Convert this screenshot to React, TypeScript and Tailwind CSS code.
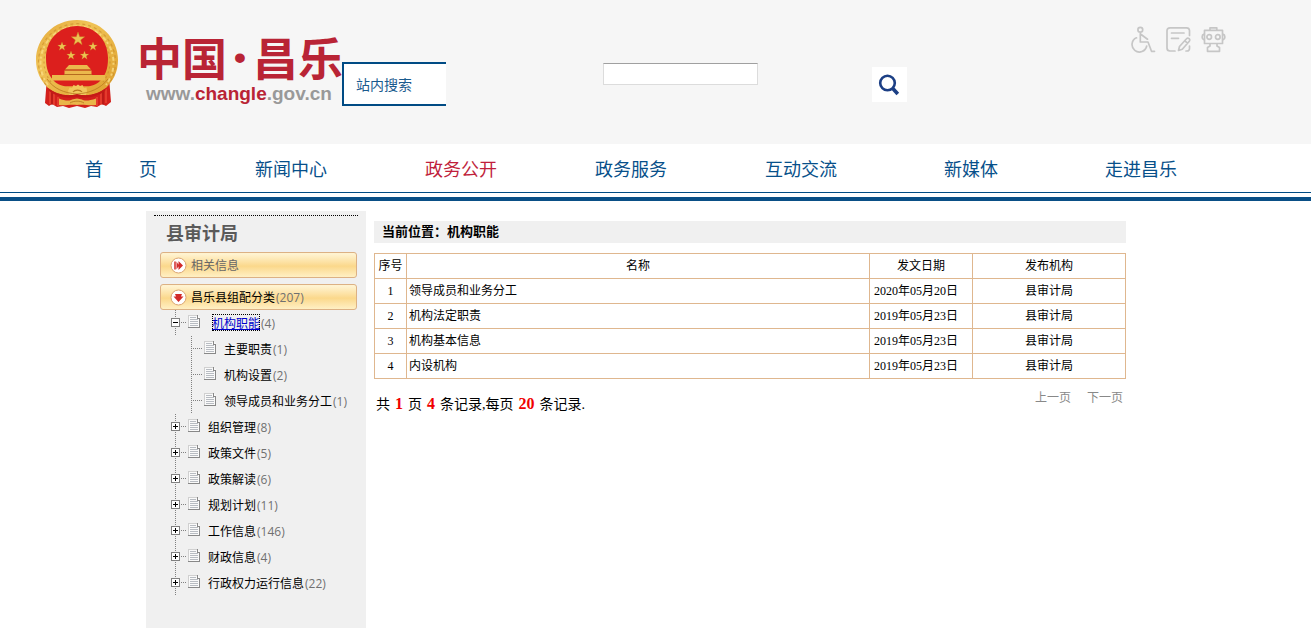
import { useState } from "react";
import type { ReactNode } from "react";
import clsx from "clsx";

const navItems = [
  { label: "首　　页" },
  { label: "新闻中心" },
  { label: "政务公开", active: true },
  { label: "政务服务" },
  { label: "互动交流" },
  { label: "新媒体" },
  { label: "走进昌乐" },
];

interface Category {
  name: string;
  count: number;
  children?: Category[];
}

const categories: Category[] = [
  {
    name: "机构职能",
    count: 4,
    children: [
      { name: "主要职责", count: 1 },
      { name: "机构设置", count: 2 },
      { name: "领导成员和业务分工", count: 1 },
    ],
  },
  { name: "组织管理", count: 8 },
  { name: "政策文件", count: 5 },
  { name: "政策解读", count: 6 },
  { name: "规划计划", count: 11 },
  { name: "工作信息", count: 146 },
  { name: "财政信息", count: 4 },
  { name: "行政权力运行信息", count: 22 },
];

const records = [
  { title: "领导成员和业务分工", date: "2020年05月20日" },
  { title: "机构法定职责", date: "2019年05月23日" },
  { title: "机构基本信息", date: "2019年05月23日" },
  { title: "内设机构", date: "2019年05月23日" },
];

const STAR =
  "M0 -7L1.7 -2.2L6.7 -2.2L2.7 .9L4.1 5.7L0 2.8L-4.1 5.7L-2.7 .9L-6.7 -2.2L-1.7 -2.2Z";

function Emblem() {
  return (
    <svg viewBox="0 0 83 92" className="h-[92px] w-[83px] shrink-0" aria-hidden="true">
      <defs>
        <linearGradient id="gold" x1="0" y1="0" x2="1" y2="1">
          <stop offset="0%" stopColor="#e3a83a" />
          <stop offset="35%" stopColor="#f0c356" />
          <stop offset="100%" stopColor="#dd9f2c" />
        </linearGradient>
      </defs>
      {/* drapery */}
      <path d="M11 58L9 84l4 3 3-2 5 3 6-1 6 2 8-2 8 2 6-2 6 1 5-3 4 2 5-4-2-25z" fill="#d3201c" />
      <path d="M14 70v15M18 74v12M65 74v12M70 70v14M22 78v9M61 78v9" stroke="#ef4e38" strokeWidth="1.200" />
      <path d="M16 72v14M67 73v13" stroke="#a51612" strokeWidth="1" />
      {/* wheat ring */}
      <path
        d="M41 1C64 1 82 19 82 41C82 53 77 62 70 69C62 75 52 78 41 75C30 78 20 75 12 69C5 62 0 53 0 41C0 19 18 1 41 1Z"
        fill="url(#gold)"
      />
      <g fill="none">
        <path d="M12 66A36.500 36.500 0 1 1 70 66" stroke="#fadc84" strokeWidth="2" strokeDasharray="4 2 2 3" opacity=".8" />
        <path d="M10 66A38.500 38.500 0 1 1 72 66" stroke="#c5882a" strokeWidth="1.200" strokeDasharray="3 3" opacity=".6" />
        <path d="M15 63A33 33 0 1 1 67 63" stroke="#c5882a" strokeWidth="1.200" strokeDasharray="2 3" opacity=".6" />
      </g>
      <path d="M41 7C59 7 72 21 72 39C72 51 69 57 63 63C55 69 48 67 41 67C34 67 27 69 19 63C13 57 10 51 10 39C10 21 23 7 41 7Z" fill="#dc1f1d" />
      <g fill="#ecc352" stroke="#c98424" strokeWidth=".4">
        <path d={STAR} transform="translate(42 20)" />
        <path d={STAR} transform="translate(26 27.500) scale(.65)" />
        <path d={STAR} transform="translate(57 27.500) scale(.65)" />
        <path d={STAR} transform="translate(35 36.500) scale(.65)" />
        <path d={STAR} transform="translate(48.500 36.500) scale(.65)" />
      </g>
      {/* gate tower */}
      <g fill="#ebb94c">
        <path d="M33 46h18l4 4.500h-26z" />
        <path d="M28.500 51.500h27v4h-27z" />
        <path d="M16 56h53v5.500H16z" />
      </g>
      <path d="M29 51h26M28 55.500h28" stroke="#b06c1c" strokeWidth=".9" />
      {/* cog and ribbons */}
      <path d="M32 72l1.500-3.500 2.500 .5 1.500-3 2.500 1 2-1.500 2 1.500 2.500-1 1.500 3 2.500-.5L51 72l-1 4H33z" fill="#f1c85c" />
      <path d="M37 73a5 3.500 0 0 1 9 0" fill="none" stroke="#b9791f" strokeWidth="1.200" />
      <path d="M11 60C18 70 28 74 41 75C54 74 64 70 72 60" fill="none" stroke="#b9791f" strokeWidth=".8" />
      <path d="M12 69C20 75 30 78 41 75C52 78 62 75 70 69L69 72C61 78 51 80 41 78C31 80 21 78 13 72Z" fill="#c41a17" />
      <path d="M23 79.500C29 82 34 82 36 80.500L41 79.500L46 80.500C48 82 53 82 60 79.500V86C53 87 48 85 41 86C34 85 29 87 23 86Z" fill="#e9b649" />
      <path d="M34 84C38 81.500 44 81.500 48 84" fill="none" stroke="#b9791f" strokeWidth=".9" />
    </svg>
  );
}

function ToolIcon({ children }: { children: ReactNode }) {
  return (
    <svg
      viewBox="0 0 25 28"
      className="h-7 w-[25px]"
      fill="none"
      stroke="#c6c6c6"
      strokeWidth="1.700"
      strokeLinecap="round"
      strokeLinejoin="round"
      aria-hidden="true"
    >
      {children}
    </svg>
  );
}

function Tools() {
  return (
    <div className="mt-[26px] flex gap-[10px]">
      <a href="#" aria-label="无障碍">
        <ToolIcon>
          <circle cx="9.300" cy="3.800" r="2.400" />
          <path d="M9.300 7.500V16H17L20.500 25.300H23.500M9.500 8L16.500 13.200M5.500 11.800A7.400 7.400 0 1 0 15.700 20" />
        </ToolIcon>
      </a>
      <a href="#" aria-label="留言">
        <ToolIcon>
          <path d="M23.500 9.500V4.500A3 3 0 0 0 20.500 1.800H4A3 3 0 0 0 1 4.800V22A3 3 0 0 0 4 25H9M20 25H21A2.500 2.500 0 0 0 23.500 22V20" />
          <path d="M5.500 7H18M5.500 12.300H12.500" />
          <path d="M12.500 24.500L13.500 20.500L20.500 12.800A1.500 1.500 0 0 1 23.300 15.200L16.300 23.300ZM18.800 14.800L21.600 17.200" />
        </ToolIcon>
      </a>
      <a href="#" aria-label="机器人">
        <ToolIcon>
          <path d="M9 4V1.800H15.800V4M3.500 4.300H21.500V17.500H3.500ZM3 8C.5 8.800 .5 13.300 3 14M22 8C24.500 8.800 24.500 13.300 22 14" />
          <circle cx="8.200" cy="11" r="2.300" />
          <circle cx="16.800" cy="11" r="2.300" />
          <path d="M9 18V20L6.500 21.500V25.300H18.500V21.500L16 20V18" />
        </ToolIcon>
      </a>
    </div>
  );
}

function Header() {
  return (
    <header className="flex h-36 items-start bg-[#f6f6f6] pr-[85px] pl-9">
      <a href="#" className="mt-[19px] flex w-[306px] shrink-0 gap-[18px]">
        <Emblem />
        <span className="block whitespace-nowrap">
          <span className="mt-[14px] flex text-[45px] leading-[48px] font-bold text-[#b92435]">
            中国
            <span className="px-[7px] font-['Liberation_Sans',sans-serif] text-[34px]">•</span>
            昌乐
          </span>
          <span className="block pl-[9px] font-['Liberation_Sans',sans-serif] text-[19px] leading-[26px] font-bold text-[#999]">
            www.<span className="text-[#b92435]">changle</span>.gov.cn
          </span>
        </span>
      </a>
      <form className="mt-[62px] flex items-start" onSubmit={(e) => e.preventDefault()}>
        <label
          htmlFor="keyword"
          className="h-11 w-[104px] border-2 border-r-0 border-[#004b84] bg-white pl-3 text-sm leading-10 text-[#1a5a8e]"
        >
          站内搜索
        </label>
        <input
          id="keyword"
          type="text"
          className="mt-px ml-[157px] h-[22px] w-[155px] border border-[#dcdcdc] border-t-[#a0a0a0] bg-white px-1 text-xs outline-none"
        />
        <button type="submit" aria-label="搜索" className="mt-[5px] ml-[114px] h-[35px] w-[35px] bg-white">
          <svg viewBox="0 0 35 35" fill="none" stroke="#1c3f85" aria-hidden="true">
            <circle cx="15.500" cy="16" r="7.300" strokeWidth="2.600" />
            <path d="M20.800 21.500L25.800 27" strokeWidth="3.600" />
          </svg>
        </button>
      </form>
      <div className="ml-auto">
        <Tools />
      </div>
    </header>
  );
}

function Nav() {
  return (
    <nav>
      <ul className="grid grid-cols-7 border-b border-[#004b84] pr-[85px] pl-9">
        {navItems.map((item) => (
          <li key={item.label} className="text-center">
            <a
              href="#"
              className={clsx(
                "block text-lg leading-[48px] whitespace-pre",
                item.active ? "text-[#c01f3c]" : "text-[#07508a]",
              )}
            >
              {item.label}
            </a>
          </li>
        ))}
      </ul>
      <div className="mt-1 h-1 bg-[#0a4f86]" />
    </nav>
  );
}

// Connector lines, optional +/- box and the page icon of one tree row
function Branch({ box, open }: { box?: boolean; open?: boolean }) {
  return (
    <svg viewBox="0 0 36 26" className="h-[26px] w-9" shapeRendering="crispEdges" aria-hidden="true">
      <path d="M5.500 0V26" stroke="#808080" strokeDasharray="1 1" />
      <path d={box ? "M11 12.500H17" : "M7 12.500H17"} stroke="#808080" strokeDasharray="1 1" />
      {box && (
        <>
          <rect x="1.500" y="8.500" width="8" height="8" fill="#fff" stroke="#808080" />
          <path d={open ? "M3 12.500H8" : "M3 12.500H8M5.500 10V15"} stroke="#000" />
        </>
      )}
      <path d="M18 5H27L30 8V18H18Z" fill="#fafafa" />
      <path d="M18.500 18V5.500H27" stroke="#d0d0d0" fill="none" />
      <path d="M27.500 5V8.500H30" stroke="#888" fill="none" />
      <path d="M29.500 8V17.500H18" stroke="#888" fill="none" />
      <path d="M20 7.500H26M20 9.500H28M20 11.500H28M20 13.500H28M20 15.500H28" stroke="#b8bcc2" />
    </svg>
  );
}

function Count({ value }: { value: number }) {
  return <span className="ml-px font-['Open_Sans',sans-serif] text-[#707070]">({value})</span>;
}

function CategoryTree() {
  const [openName, setOpenName] = useState<string | null>("机构职能");

  return (
    <ul className="pl-6 text-xs leading-[26px] text-black">
      {categories.map((item) => {
        const open = item.name === openName;
        return (
          <li key={item.name}>
            <div className="flex h-[26px] gap-[2px]">
              <button
                type="button"
                aria-label={item.name}
                aria-expanded={open}
                onClick={() => setOpenName(open ? null : item.name)}
              >
                <Branch box open={open} />
              </button>
              <span className={clsx("whitespace-nowrap", item.children && "pl-1")}>
                <a
                  href="#"
                  className={clsx(
                    item.children &&
                      "text-[#0000cc] underline outline-1 -outline-offset-1 outline-black outline-dotted",
                  )}
                >
                  {item.name}
                </a>
                <Count value={item.count} />
              </span>
            </div>
            {open && item.children && (
              <ul className="pl-4">
                {item.children.map((child) => (
                  <li key={child.name} className="flex h-[26px] gap-[2px] whitespace-nowrap">
                    <Branch />
                    <span>
                      <a href="#">{child.name}</a>
                      <Count value={child.count} />
                    </span>
                  </li>
                ))}
              </ul>
            )}
          </li>
        );
      })}
    </ul>
  );
}

function PanelButton({ icon, children }: { icon: ReactNode; children: ReactNode }) {
  return (
    <button
      type="button"
      className="flex h-[26px] w-full items-center gap-1 rounded-[3px] border border-[#dcb184] bg-linear-to-b from-[#fff3d0] from-5% via-[#fbd88b] via-55% to-[#fff0c4] pl-[9px] text-xs"
    >
      <svg viewBox="0 0 17 17" className="h-[17px] w-[17px]" aria-hidden="true">
        <circle cx="8.500" cy="8.500" r="7.500" fill="#fff" stroke="#dba673" />
        {icon}
      </svg>
      <span>{children}</span>
    </button>
  );
}

function Sidebar() {
  return (
    <aside className="w-[220px] shrink-0 bg-[#f0f0f0] pt-1">
      <div className="mx-2 border-t border-dotted border-black" />
      <h2 className="pb-1 pl-5 text-lg leading-8 font-bold text-[#5a5a5a]">县审计局</h2>
      <div className="flex flex-col gap-[6px] pr-[9px] pl-[14px]">
        <PanelButton
          icon={
            <>
              <path d="M5 4.500V12.500" stroke="#d22a2a" strokeWidth="1.500" />
              <path d="M6.500 4.500L9 8.500L6.500 12.500ZM8.500 4L13 8.500L8.500 13Z" fill="#d22a2a" />
            </>
          }
        >
          <span className="text-[#666]">相关信息</span>
        </PanelButton>
        <PanelButton
          icon={<path d="M5 5H12L11 7.500H13.500L8.500 13L3.500 7.500H6Z" fill="#d22a2a" />}
        >
          <span className="text-black">昌乐县组配分类</span>
          <Count value={207} />
        </PanelButton>
      </div>
      <CategoryTree />
    </aside>
  );
}

function RecordTable() {
  return (
    <table className="mt-[10px] w-full table-fixed border-collapse text-xs text-black">
      <colgroup>
        <col className="w-8" />
        <col />
        <col className="w-[103px]" />
        <col className="w-[153px]" />
      </colgroup>
      <thead>
        <tr className="h-[25px]">
          {["序号", "名称", "发文日期", "发布机构"].map((head) => (
            <th key={head} className="border border-[#dfb78f] p-0 pb-[2px] font-normal">
              {head}
            </th>
          ))}
        </tr>
      </thead>
      <tbody>
        {records.map((record, i) => (
          <tr key={record.title} className="h-[25px]">
            <td className="border border-[#dfb78f] p-0 text-center font-['Liberation_Serif',serif]">
              {i + 1}
            </td>
            <td className="border border-[#dfb78f] p-0 pb-[2px] pl-[2px]">
              <a href="#">{record.title}</a>
            </td>
            <td className="border border-[#dfb78f] p-0 pl-1 font-['Liberation_Serif','Noto_Sans_CJK_SC',serif]">
              {record.date}
            </td>
            <td className="border border-[#dfb78f] p-0 pb-[2px] text-center">县审计局</td>
          </tr>
        ))}
      </tbody>
    </table>
  );
}

function Total({ value }: { value: number }) {
  return <b className="px-[5px] text-base leading-7 text-[#f00000]">{value}</b>;
}

function Content() {
  return (
    <section className="min-w-0 flex-1 pt-[10px]">
      <h1 className="bg-[#f0f0f0] pb-[2px] pl-2 text-[13px] leading-5 font-bold text-black">
        当前位置：机构职能
      </h1>
      <RecordTable />
      <div className="flex justify-between">
        <p className="mt-[11px] pl-[2px] font-['Liberation_Serif','Noto_Sans_CJK_SC',serif] text-sm leading-7 text-black">
          共<Total value={1} />页<Total value={4} />
          条记录,每页
          <Total value={20} />
          条记录.
        </p>
        <div className="mt-2 flex gap-4 pr-[3px] text-xs leading-5 text-[#888]">
          <a href="#">上一页</a>
          <a href="#">下一页</a>
        </div>
      </div>
    </section>
  );
}

export default function App() {
  return (
    <div className="flex min-h-screen flex-col bg-white font-['Noto_Sans_CJK_SC',sans-serif]">
      <Header />
      <Nav />
      <main className="flex flex-1 gap-2 pt-[10px] pr-[185px] pl-[146px]">
        <Sidebar />
        <Content />
      </main>
    </div>
  );
}
